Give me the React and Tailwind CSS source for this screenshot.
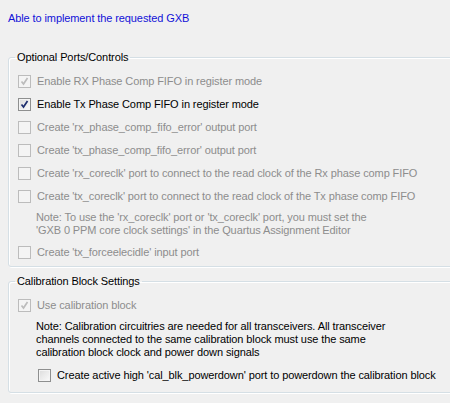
const Check = ({ checked, disabled }) => (
  <span
    className={
      "flex h-[13px] w-[13px] flex-shrink-0 items-center justify-center border " +
      (disabled
        ? "border-[#bcbcbc] bg-[#f4f4f4]"
        : "border-[#8e8f8f] bg-gradient-to-br from-[#dcdcdc] to-[#fbfbfb] shadow-[inset_0_0_0_1px_#f4f4f4]")
    }
  >
    {checked && (
      <svg width="9" height="9" viewBox="0 0 9 9">
        <path
          d="M1.5 4.5 L3.5 7 L7.5 1"
          fill="none"
          stroke={disabled ? "#bcbcbc" : "#1f2f6f"}
          strokeWidth="1.7"
        />
      </svg>
    )}
  </span>
);

const Row = ({ label, checked, disabled, indent }) => (
  <div className={"flex h-[23px] items-center gap-[6px] " + (indent ? "pl-[29px]" : "pl-[9px]")}>
    <Check checked={checked} disabled={disabled} />
    <span className={disabled ? "text-[#8d8d8d]" : "text-black"}>{label}</span>
  </div>
);

const Group = ({ title, children, className }) => (
  <fieldset
    className={
      "ml-[8px] w-[460px] rounded-[3px] border border-[#d5dfe5] shadow-[inset_1px_1px_0_#fff,1px_1px_0_#fff] " +
      className
    }
  >
    <legend className="ml-[6px] px-[2px] text-black">{title}</legend>
    {children}
  </fieldset>
);

export default function App() {
  return (
    <div className="h-[403px] w-[450px] overflow-hidden bg-[#f0f0f0] font-['Liberation_Sans',Arial,sans-serif] text-[11px] leading-[13px] tracking-[-0.1px]">
      <div className="pl-[8px] pt-[12px] text-[#1212d8]">Able to implement the requested GXB</div>

      <Group title="Optional Ports/Controls" className="mt-[26px] pb-[2px]">
        <div className="pt-[6px]">
          <Row label="Enable RX Phase Comp FIFO in register mode" checked disabled />
          <Row label="Enable Tx Phase Comp FIFO in register mode" checked />
          <Row label="Create 'rx_phase_comp_fifo_error' output port" disabled />
          <Row label="Create 'tx_phase_comp_fifo_error' output port" disabled />
          <Row label="Create 'rx_coreclk' port to connect to the read clock of the Rx phase comp FIFO" disabled />
          <Row label="Create 'tx_coreclk' port to connect to the read clock of the Tx phase comp FIFO" disabled />
          <div className="mt-[3px] pl-[27px] text-[#8d8d8d]">
            <div>Note: To use the 'rx_coreclk' port or 'tx_coreclk' port, you must set the</div>
            <div>'GXB 0 PPM core clock settings' in the Quartus Assignment Editor</div>
          </div>
          <div className="mt-[4px]">
            <Row label="Create 'tx_forceelecidle' input port" disabled />
          </div>
        </div>
      </Group>

      <Group title="Calibration Block Settings" className="mt-[8px] pb-[5px]">
        <div className="pt-[6px]">
          <Row label="Use calibration block" checked disabled />
          <div className="mt-[3px] pl-[27px] text-black">
            <div>Note: Calibration circuitries are needed for all transceivers. All transceiver</div>
            <div>channels connected to the same calibration block must use the same</div>
            <div>calibration block clock and power down signals</div>
          </div>
          <div className="mt-[5px]">
            <Row label="Create active high 'cal_blk_powerdown' port to powerdown the calibration block" indent />
          </div>
        </div>
      </Group>
    </div>
  );
}
